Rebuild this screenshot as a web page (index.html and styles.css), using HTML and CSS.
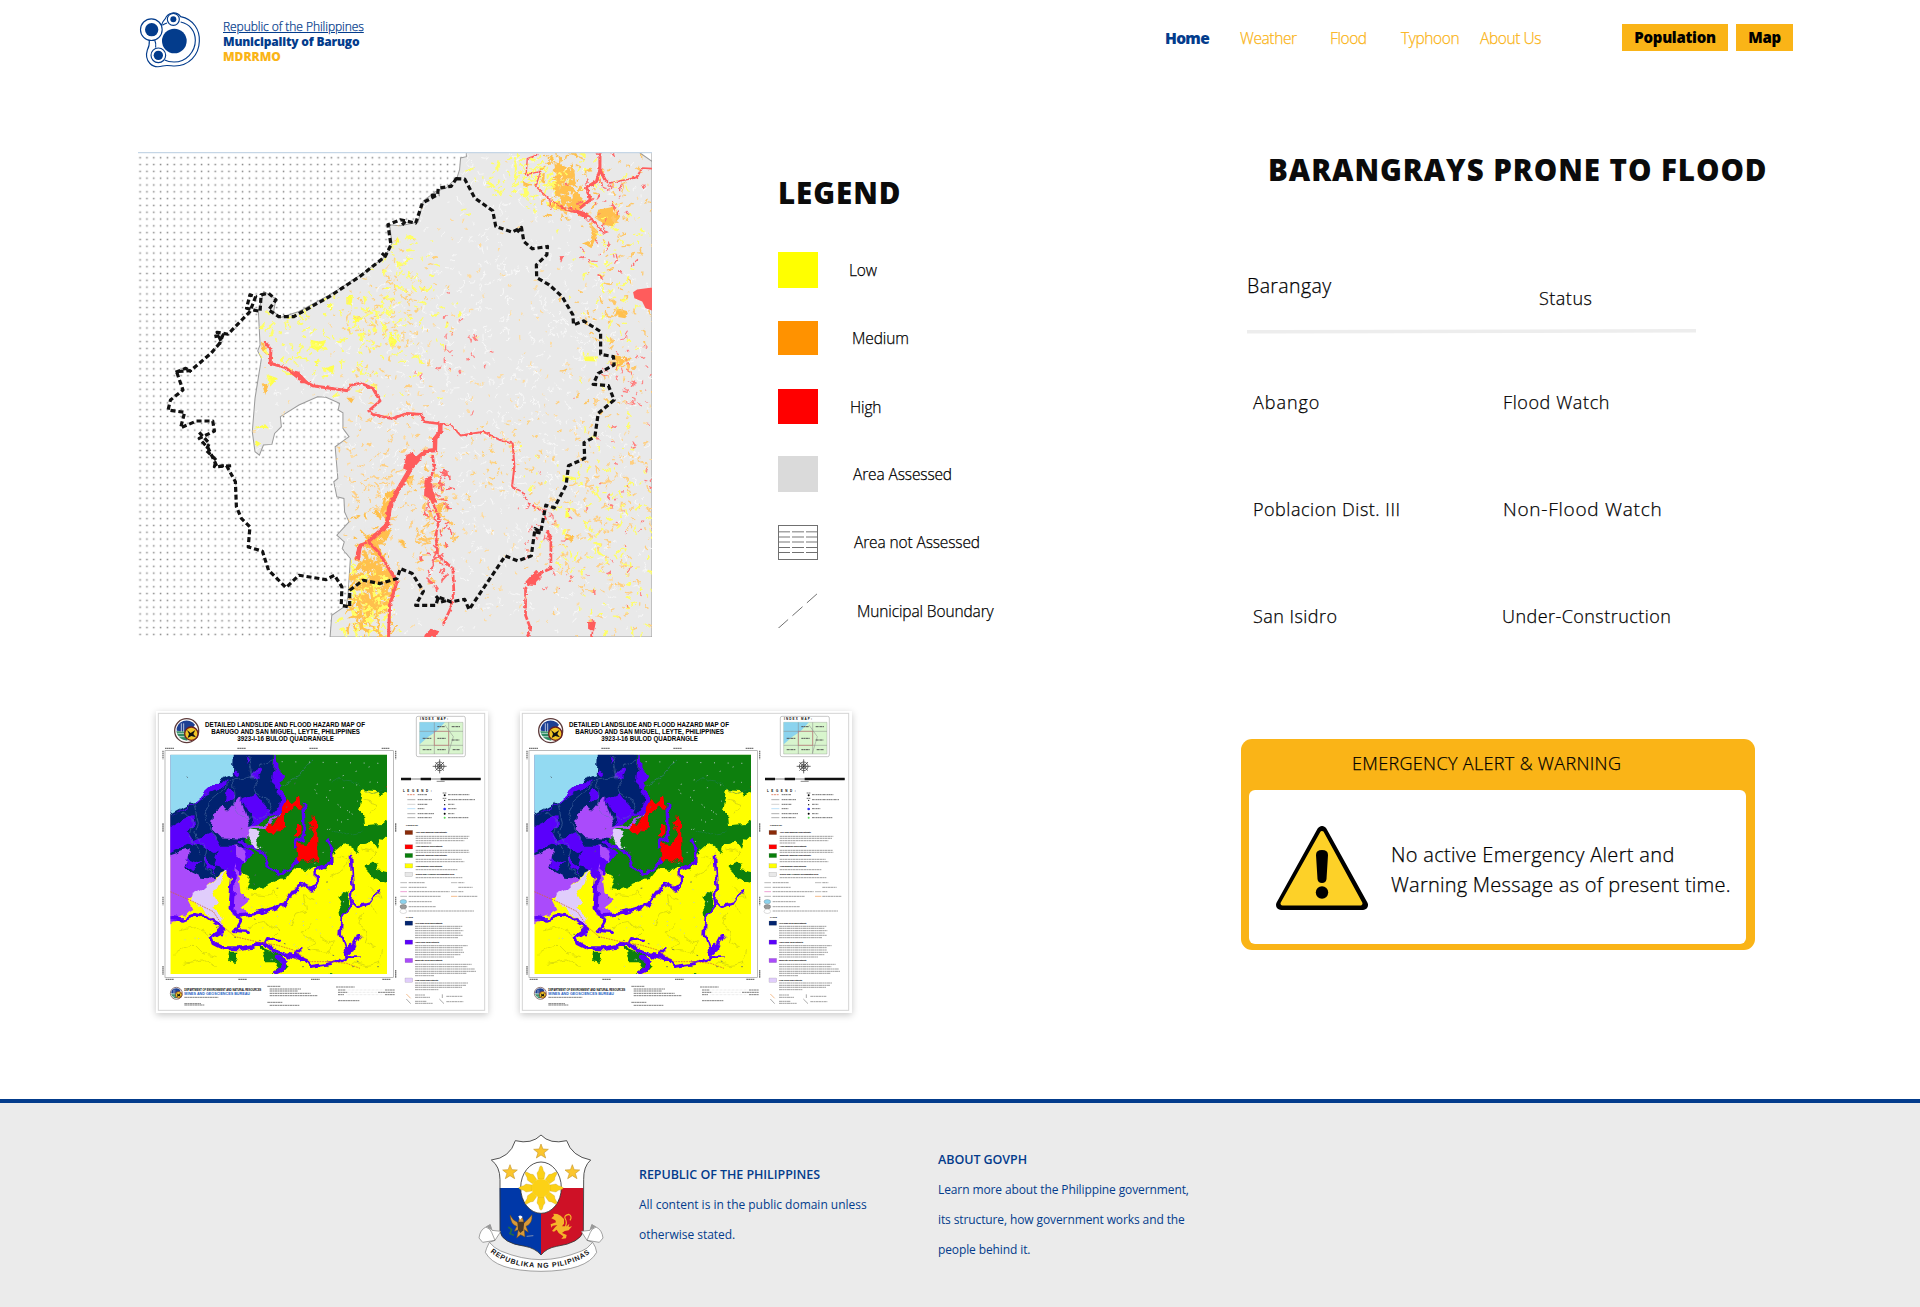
FILE: index.html
```html
<!DOCTYPE html>
<html lang="en">
<head>
<meta charset="utf-8">
<title>Municipality of Barugo MDRRMO</title>
<link rel="stylesheet" href="styles.css">
</head>
<body>
<header class="header">
  <a class="brand" href="#">
    <svg class="brand-logo" viewBox="54 24 192 186" fill="none" stroke="#033c8c" stroke-width="3.4">
      <path d="M124 76A49 49 0 0 1 136 56 26 26 0 0 1 182 50C222 58 240 92 238 124 237 166 206 198 164 198 148 197 137 195 128 198 96 208 72 182 82 150Q89 138 88 120"/>
      <path d="M127 76Q133 72 141 69M182 66C210 72 226 94 226 121 226 156 198 186 162 186 150 186 141 184 134 180M104 120Q109 130 107 143"/>
      <circle cx="94" cy="89" r="32.500" fill="#fff"/><circle cx="160" cy="58" r="18" fill="#fff"/><circle cx="115" cy="166" r="22" fill="#fff"/>
      <g fill="#033c8c" stroke="none"><circle cx="163" cy="123" r="37"/><circle cx="95" cy="89" r="20"/><circle cx="160" cy="58" r="9"/><circle cx="115" cy="166" r="14"/></g>
    </svg>
    <span class="brand-text">
      <span class="brand-country">Republic of the Philippines</span>
      <span class="brand-town">Municipality of Barugo</span>
      <span class="brand-office">MDRRMO</span>
    </span>
  </a>
  <nav class="nav">
    <a class="nav-link nav-link-active" href="#">Home</a>
    <a class="nav-link" href="#">Weather</a>
    <a class="nav-link" href="#">Flood</a>
    <a class="nav-link" href="#">Typhoon</a>
    <a class="nav-link" href="#">About Us</a>
  </nav>
  <div class="actions">
    <a class="button button-wide" href="#">Population</a>
    <a class="button" href="#">Map</a>
  </div>
</header>

<main class="main">
  <div class="left">
    <div class="overview">
      <svg class="flood-map" viewBox="24 22 1520 1453" preserveAspectRatio="none">
        <defs>
          <pattern id="dots" x="20" y="29" width="20.200" height="20.400" patternUnits="userSpaceOnUse"><rect width="20.200" height="20.400" fill="#fff"/><rect x="8" y="8" width="4.500" height="4.500" fill="#858585"/></pattern>
          <filter id="ragged" x="0" y="0" width="1" height="1"><feTurbulence type="fractalNoise" baseFrequency=".12" numOctaves="2" seed="4"/><feDisplacementMap in="SourceGraphic" scale="9" xChannelSelector="R" yChannelSelector="G"/></filter>
          <path id="land" d="M995 22V36L978 40 975 75 968 97 935 130 905 140 868 168 852 232 800 243 768 240 775 295 755 335 690 385 600 445 500 500 445 518 425 500 432 462 396 440 380 500 385 600 378 618 389 640 370 760 362 860 370 920 383 930 395 900 420 898 428 865 448 845 445 815 500 780 555 755 580 757 620 775 616 795 630 803 630 850 648 875 607 905 615 1000 603 1010 612 1055 633 1060 635 1100 648 1130 612 1170 634 1190 628 1210 652 1240 645 1350 640 1380 597 1410 592 1475H1544V22Z"/>
          <clipPath id="land-clip"><use href="#land"/></clipPath>
        </defs>
        <rect x="24" y="22" width="1520" height="1453" fill="url(#dots)"/>
        <use href="#land" fill="#e9e9e9" stroke="#9b9b9b" stroke-width="3"/>
        <g clip-path="url(#land-clip)">
          <g filter="url(#ragged)">
          <g fill="#ffc04d">
            <path d="M1255 50L1295 70 1310 60 1315 100 1300 120 1330 150 1350 180 1320 205 1260 195 1230 180 1275 165 1255 140 1240 110 1260 100ZM1385 195L1435 185 1450 215 1430 245 1400 240 1380 215ZM1365 240L1385 260 1365 310 1340 295 1365 285ZM700 1170L775 1150 760 1185 735 1200 770 1270 790 1300 780 1360 760 1400 725 1390 700 1440 660 1410 680 1340 660 1290 680 1240Z"/>
            <path d="M755 1045L785 1030 760 1130 740 1100ZM812 1000L840 990 830 1030ZM640 758H665L655 775ZM388 590L400 600 405 630 390 615ZM390 715L410 720 400 750ZM1440 490L1475 500 1465 520 1435 515ZM1430 630L1485 640 1440 670ZM905 1080L930 1075 915 1110ZM1290 1165L1315 1175 1305 1190 1285 1180Z"/>
          </g>
          <g fill="#ffff4d">
            <path d="M535 585L560 590 580 585 572 605 555 618 535 608ZM640 455L660 450 655 480 640 478ZM585 480L603 475 595 500ZM660 510L690 520 665 535ZM770 560L790 590 775 615 765 590ZM545 650L560 640 555 665ZM575 670L605 660 600 685ZM410 690L437 700 415 725ZM365 850L400 838 412 850 390 848ZM370 885L388 895 375 905ZM790 275L800 290 785 300ZM1340 635H1385L1380 650 1345 648ZM1280 990L1330 1000 1280 1010ZM1290 1090L1302 1115 1287 1118Z"/>
          </g>
          <g id="flecks" stroke-linejoin="round" stroke-linecap="round"></g>
          <g fill="none" stroke="#ff5c5c" stroke-linejoin="round">
            <path stroke-width="9" d="M397 588L417 615 415 655 460 668 500 700 540 722 645 737"/>
            <path stroke-width="8" d="M645 737L650 722 682 714 718 730 740 768 706 797 718 808 775 821 820 805 862 808 870 830 915 836"/>
            <path stroke-width="6" d="M915 836L950 841 978 871 1045 860 1095 885 1132 895 1137 965 1130 1025"/>
            <path stroke-width="5" stroke-dasharray="12 5" d="M1130 1025L1160 1040 1180 1075 1222 1100 1232 1125"/>
            <path stroke-width="13" d="M918 838V860L903 880 902 915 875 918 850 940"/>
            <path stroke-width="14" d="M838 935L825 980 790 1040 768 1085 760 1140 705 1190"/>
            <path stroke-width="9" d="M705 1190L735 1220 790 1310 768 1380 765 1475"/>
            <path stroke-width="8" stroke-dasharray="23 3" d="M895 930L900 970 880 1020 895 1070 915 1120 905 1170 910 1230 955 1270 958 1340 948 1390 925 1440"/>
            <path stroke-width="4" d="M1208 29L1175 42 1172 90 1215 80 1200 125 1242 165 1245 195"/>
            <path stroke-width="9" d="M1390 22V75L1405 105M1390 75L1380 110 1350 128 1362 165 1330 190"/>
            <path stroke-width="5" d="M1400 100L1420 115 1500 98 1515 70 1544 72M1250 170L1290 195 1360 215 1400 265"/>
            <path stroke-width="8" stroke-dasharray="30 5" d="M1235 1155L1245 1190 1245 1270 1200 1290 1170 1330 1170 1410 1185 1450 1175 1475M1370 1425L1365 1475"/>
          </g>
          <g fill="#ff5c5c">
            <path d="M818 930L835 922 860 945 830 980 808 970ZM872 1000L890 995 895 1030 910 1075 895 1065 870 1052ZM680 1195L705 1188 685 1210 680 1245 665 1245 672 1205ZM480 675L500 680 530 715 505 715ZM1290 185L1355 205 1350 225ZM1200 1275L1215 1290 1200 1320 1165 1315ZM872 1468L890 1450 915 1458 905 1475H870ZM1355 1430H1378L1372 1460 1355 1450Z"/>
          </g>
          </g>
          <path d="M1488 442L1500 434 1544 428V497L1525 490 1515 470 1492 460Z" fill="#ff5c5c"/>
        </g>
        <path d="M1505 22L1544 50V22Z" fill="#fff" stroke="#9b9b9b" stroke-width="3"/>
        <g fill="none" stroke="#111" stroke-width="9.500" stroke-dasharray="15 8.500" stroke-linejoin="round">
          <path d="M965 102L990 103 1020 160 1073 198 1082 245 1130 262 1158 248 1165 290 1190 312 1235 305 1233 330 1202 360 1203 398 1240 420 1278 455 1310 510 1312 540 1342 528 1392 560 1392 628 1430 635 1432 660 1385 685 1370 718 1415 722 1432 765 1385 805 1375 875 1343 893 1345 940 1297 962 1290 1020 1255 1088 1230 1080 1215 1160 1198 1150 1187 1232 1147 1247 1110 1232 1003 1393 990 1362 950 1370 912 1355 905 1380 845 1380 868 1338 835 1285 800 1270 790 1300 740 1315 690 1305 650 1335 650 1385 625 1380 627 1325 605 1290 580 1303 500 1290 462 1327 410 1275 392 1218 350 1205 355 1145 330 1120 315 1085 312 1010 285 960 258 965 232 910 205 880 250 858 245 828 197 828 150 848 162 802 113 795 120 765 157 735 138 680 180 677 240 625 270 590 258 562 290 568 355 500 372 455 355 450 345 490 385 500 388 450 410 445 432 465 410 495 440 515 485 515 590 455 680 395 755 335 772 300 763 240 800 225 845 235 865 175 910 150 912 130 950 125Z"/>
          <path d="M205 862L235 895 225 915 255 945 250 965 300 962M135 682L165 670 182 680M745 325L762 340M890 152L915 150M1145 262L1160 248M1200 1160L1220 1165M250 575L275 570 265 598M805 240L815 230M905 1352L920 1370 940 1365"/>
        </g>
        <path d="M24 23.500H1544" stroke="#c5d6e6" stroke-width="5"/>
      </svg>

      <section class="legend">
        <h2 class="heading">LEGEND</h2>
        <ul class="legend-list">
          <li><span class="swatch low"></span><span class="t-low">Low</span></li>
          <li><span class="swatch medium"></span><span class="t-medium">Medium</span></li>
          <li><span class="swatch high"></span><span class="t-high">High</span></li>
          <li><span class="swatch assessed"></span><span class="t-assessed">Area Assessed</span></li>
          <li>
            <svg class="swatch-svg" viewBox="0 0 40 35" fill="none" stroke="#707070"><rect x=".5" y=".5" width="39" height="34"/><path d="M1 22.500H12M14 22.500H26M28 22.500H39M1 27.500H12M14 27.500H26M28 27.500H39"/><path stroke="#a5a5a5" stroke-width="1.500" d="M1 6.700H12M14 6.700H26M28 6.700H39M1 11.900H12M14 11.900H26M28 11.900H39M1 17.100H12M14 17.100H26M28 17.100H39"/></svg>
            <span class="t-not">Area not Assessed</span>
          </li>
          <li>
            <svg class="swatch-svg" viewBox="0 0 40 35" fill="none" stroke="#707070"><path stroke-dasharray="13.500 5.800" d="M0 35.500L40 0"/></svg>
            <span class="t-boundary">Municipal Boundary</span>
          </li>
        </ul>
      </section>
    </div>

    <div class="gallery">
      <figure class="sheet">
        <svg class="sheet-map" viewBox="18 33 996 906">
          <defs>
            <filter id="organic" x="0" y="0" width="1" height="1"><feTurbulence type="fractalNoise" baseFrequency=".035" numOctaves="2" seed="9"/><feDisplacementMap in="SourceGraphic" scale="26" xChannelSelector="R" yChannelSelector="G"/></filter>
            <g id="sheet">
              <rect x="25" y="40" width="979" height="891" fill="#fff" stroke="#d4d4d4" stroke-width="3"/>
              <g id="seal">
                <circle cx="110" cy="92" r="36" fill="#fff" stroke="#5c3a3a" stroke-width="4"/>
                <path d="M80 92A30 28 0 0 1 135 74L120 96Z" fill="#1d3f93"/><path d="M79 94H112V122Q84 120 79 94Z" fill="#2f8a63"/><path d="M82 100H110M85 110H110M94 70V95M101 70V95" stroke="#fff" stroke-width="2"/>
                <circle cx="124" cy="101" r="20" fill="#f1c526" stroke="#6b2020" stroke-width="4"/><path d="M111 90L122 99 136 90 130 102 138 112 124 108 113 114 117 102Z" fill="#111"/>
              </g>
              <g class="sheet-title" text-anchor="middle">
                <text x="405" y="80" textLength="480" lengthAdjust="spacingAndGlyphs">DETAILED LANDSLIDE AND FLOOD HAZARD MAP OF</text>
                <text x="407" y="101" textLength="446" lengthAdjust="spacingAndGlyphs">BARUGO AND SAN MIGUEL, LEYTE, PHILIPPINES</text>
                <text x="407" y="122" textLength="290" lengthAdjust="spacingAndGlyphs">3923-I-16 BULOD QUADRANGLE</text>
              </g>
              <rect x="45" y="152" width="685" height="680" fill="none" stroke="#999" stroke-width="2"/>
              <path d="M45 145H72M262 145H288M478 145H504M695 145H718M47 838H72M265 838H291M483 838H509M697 838H722M39 152V178M39 370V396M39 590V616M39 798V824M737 152V178M737 370V396M737 590V616M737 810V834" stroke="#777" stroke-width="4" stroke-dasharray="5 1"/>
              <clipPath id="frame"><rect x="61" y="164" width="650" height="658"/></clipPath>
              <g clip-path="url(#frame)">
                <rect x="61" y="164" width="650" height="658" fill="#ff0"/>
                <path fill="#5a02fb" d="M61 164H360V350L200 490 61 470Z"/>
                <g filter="url(#organic)">
                <path fill="#087f0b" d="M370 140H735V270L690 290 680 270 650 268 640 300 628 330 645 345 645 375 700 370 735 350V420L690 415 680 450 665 425 635 430 625 460 585 430 550 460 550 490 530 505 490 500 470 510 430 505 410 530 370 548 320 570 290 565 300 535 275 520 260 460 300 400 340 360Z"/>
                <path fill="#ff0" d="M640 268L680 272 690 290 735 275V345L700 372 645 375 642 340 628 330Z"/>
                <path fill="#087f0b" d="M640 500L670 488 690 495 680 510 735 520V550L670 535ZM580 570L598 575 592 630 572 655 566 610ZM240 755H262L258 775 250 790 238 780ZM335 740L395 765 420 800 400 822H365L385 805 375 790 345 790ZM540 815L550 822H530Z"/>
                <path fill="#02246f" d="M240 130H370V215L390 270 400 310 370 345 310 370 280 440 230 500 170 560 110 590 30 560V350L61 330 130 295 200 245 240 215Z"/>
                <path fill="#93daf2" d="M30 130H250L245 225 205 240 160 290 61 342 30 360Z"/>
                <path fill="#5a02fb" d="M375 130L380 210 410 230 388 245 405 285 405 325 380 345 310 375 300 340 275 300 320 280 365 345 385 315 390 270 365 245 370 210ZM61 350L130 310 205 243 238 245 215 262 165 290 110 325ZM30 385L61 380 130 345 135 375 110 390 130 420 185 395 215 445 195 460 150 435 120 430 30 470ZM210 440L290 440 310 460 300 480 280 490 270 530 245 520 190 500ZM230 270Q250 260 255 285T225 300ZM288 165L300 185 290 195ZM250 205L268 225 262 232 248 222ZM318 205Q335 200 328 222T305 235ZM160 470Q190 490 195 520L170 505ZM115 475L150 490 130 510 110 500Z"/>
                <path fill="#aa4bfb" d="M190 335L215 320 235 335 272 290 290 350 300 380 345 375 400 330 350 385 300 390 295 420 250 418 215 415 185 385ZM30 475L120 445 115 480 105 505 155 530 200 535 160 570 110 590 130 630 61 670 30 680ZM250 435L285 450 290 470 285 490 265 470ZM260 490L272 580 300 600 270 625 300 635 250 650 240 600Z"/>
                <path fill="#e0cdfb" d="M230 500L210 560 190 570 205 610 190 625 218 650 215 685 175 640 120 600 125 580 180 555 215 520ZM300 390L330 395 315 420 335 445 310 440 295 410Z"/>
                <path fill="#f00" d="M410 290L425 310 450 288 455 325 430 320 420 345 405 345 405 385 385 388 370 405 350 385 355 370 370 375 390 340ZM438 378H452L450 415H438ZM485 345L498 360 500 470 505 490 490 480 475 492 460 480 428 488 445 470 440 430 465 435 480 425 490 400 480 370ZM715 248L705 258 715 262Z"/>
                <g fill="none" stroke="#5a02fb" stroke-linejoin="round" stroke-linecap="round">
                  <path stroke-width="15" d="M230 500L250 530 243 630 265 645"/>
                  <path stroke-width="10" d="M40 654L100 660 140 645 170 650 205 675 215 705M265 645L300 640 340 632 400 620 420 590 450 550 485 570 500 545 498 510 545 490 545 455 532 420M265 645L275 660 255 695 298 697"/>
                  <path stroke-width="12" d="M217 690L185 710 190 730 220 745 270 745 320 735 350 735 370 750 410 765 440 770 465 780"/>
                  <path stroke-width="8" d="M345 735L355 715 385 720M465 780L480 800 550 790 590 770 585 740 572 700 575 655 600 620 608 570 603 465M600 595L625 620 660 610 687 570M585 745L610 745 630 705M590 770L625 770M435 765L455 745M270 430L310 440 340 460 360 500 390 525 420 500 440 480M462 315L465 360 460 420 440 425 435 445"/>
                  <path stroke-width="17" d="M385 775L405 785 400 810 380 820M590 755L605 740"/>
                  <path stroke-width="13" d="M461 325L464 400"/>
                </g>
                <path fill="none" stroke="#5579ad" stroke-width="1.500" d="M245 225L255 280 250 330 290 355 350 350 365 310 320 280 310 230 330 195 370 180M130 305L145 370 135 400 170 450 160 500 200 530 230 500M295 165L310 230 250 240 180 300 165 350 200 420M90 340L130 360 120 410 150 460M395 260L450 220 490 175"/>
                <path fill="none" stroke="#a3a81c" stroke-width="1.200" d="M300 585L350 590 370 570 385 590M420 680L440 640 470 630 460 590 500 600M480 670L460 700 490 720 470 750 530 760 550 730 510 710M640 640L620 670 650 690 640 730 680 740M660 560L690 590 660 600 680 640M90 690L130 680 180 700M80 760L130 730 160 760 200 770M100 790L160 780 200 800M290 680L340 670 390 690 370 710M560 470L600 480 580 510 540 530M640 450L680 460 660 480M640 300L680 310 660 340M610 790L650 800 690 790 700 750"/>
                <path fill="none" stroke="#2f7a60" stroke-width="1.500" d="M545 250L570 235 605 240 640 265 670 280 711 265M545 385L590 405 640 395"/>
                </g>
                <path fill="none" stroke="#d46a35" stroke-width="2.500" stroke-dasharray="5 3" d="M61 575L130 605 190 635 220 680 255 710 320 725 380 735 430 750 480 785 540 785 590 790 630 805"/>
                <path fill="none" stroke="#b8c8c8" stroke-width="3" stroke-dasharray="3 38" d="M395 185L690 190 480 260 620 350 500 280 690 240 520 400 600 350 450 550 680 600 300 620 500 690 330 800 620 640 100 720 300 700"/>
                <path fill="none" stroke="#53616c" stroke-width="2.500" stroke-dasharray="5 70" d="M110 230L230 335 275 385 225 495 340 570 540 545 155 700 400 730 690 800 400 800 280 600 400 350 440 235"/>
              </g>
              <rect x="799" y="49" width="147" height="121" rx="5" fill="#fff" stroke="#ababab" stroke-width="2"/>
              <text class="sheet-label" x="810" y="59" textLength="84">INDEX MAP:</text>
              <path d="M809 67H939V162H809Z" fill="#d8f5cd" stroke="#888"/><path d="M809 67H885L858 95 835 110 809 133Z" fill="#8bd3ee"/>
              <path d="M853 67V162M896 67V162M809 94H939M809 136H939M885 75L910 110 895 160" fill="none" stroke="#888" stroke-width="1.500"/><path d="M853 94H896V136H853Z" fill="none" stroke="#c66" stroke-width="1.500"/>
              <path d="M818 149H845M862 149H888M908 149H930M862 80H885M905 80H930M862 115H888M818 115H845M905 120H928" stroke="#555" stroke-width="3" stroke-dasharray="7 1 4 1"/>
              <g fill="none" stroke="#222" stroke-width="2"><circle cx="869" cy="199" r="13"/><circle cx="869" cy="199" r="7"/><path d="M869 178V220M848 199H890M856 186L882 212M882 186L856 212"/></g>
              <path d="M753 237H993" stroke="#aaa" stroke-width="5"/><path d="M753 237H783M812 237H843M872 237H992" stroke="#111" stroke-width="7"/><path d="M860 244H884" stroke="#888" stroke-width="3"/>
              <text class="sheet-label" x="759" y="275" textLength="86">LEGEND:</text>
              <g fill="none" stroke-width="2"><path stroke="#d55b36" stroke-dasharray="6 2" d="M772 284H796"/><path stroke="#888" d="M772 299H796M772 341H796M772 353H796"/><path stroke="#bbb" d="M772 313H796"/><path stroke="#9ad0f4" d="M772 326H796"/></g>
              <path d="M803 284H832M803 299H846M803 313H833M803 326H823M803 341H852M803 353H845M894 284H958M894 299H975M894 313H913M894 326H919M894 341H913M894 353H956M878 279H890M878 295H890" stroke="#777" stroke-width="3" stroke-dasharray="6 1 3 1"/>
              <circle cx="884" cy="286" r="3"/><circle cx="884" cy="301" r="2"/><circle cx="884" cy="314" r="2"/><circle cx="884" cy="327" r="4" fill="#33f"/><circle cx="884" cy="341" r="3"/><circle cx="884" cy="353" r="3" fill="#5d5"/>
              <g class="sheet-small">
                <text x="768" y="379" textLength="36">Landslide</text>
                <text x="797" y="399" textLength="94">Very high landslide susceptibility</text><text x="797" y="442" textLength="81">High landslide susceptibility</text><text x="797" y="468" textLength="94">Moderate landslide susceptibility</text><text x="797" y="500" textLength="80">Low landslide susceptibility</text><text x="797" y="524" textLength="116">Debris flow / Possible accumulation area</text>
                <text x="768" y="655" textLength="21">Flood</text><text x="795" y="671" textLength="83">Very high flood susceptibility</text><text x="795" y="729" textLength="73">High flood susceptibility</text><text x="795" y="784" textLength="83">Moderate flood susceptibility</text><text x="795" y="842" textLength="70">Low flood susceptibility</text>
              </g>
              <g stroke="#777" stroke-width=".6"><rect x="765" y="391" width="23" height="13" fill="#8a2a08"/><rect x="765" y="434" width="23" height="13" fill="#f00"/><rect x="765" y="460" width="23" height="13" fill="#087f0b"/><rect x="765" y="491" width="23" height="13" fill="#ff0"/><rect x="765" y="517" width="23" height="13" fill="#e8e8e8"/><rect x="765" y="663" width="23" height="13" fill="#02246f"/><rect x="765" y="720" width="23" height="13" fill="#5a02fb"/><rect x="765" y="775" width="23" height="13" fill="#aa4bfb"/><rect x="765" y="834" width="23" height="13" fill="#e0cdfb"/></g>
              <path stroke="#9a9a9a" stroke-width="2.800" stroke-dasharray="9 1 5 1 7 1" d="M797 409H958M797 415H954M797 422H943M797 429H845M797 451H956M797 457H958M797 478H935M797 485H943M797 509H922M797 533H937M776 548H825M776 562H830M776 575H899M776 589H873M925 548H943M925 562H968M925 575H941M925 589H982M776 605H845M776 620H857M776 633H972M795 679H937M795 685H932M795 692H940M795 699H933M795 706H938M795 713H925M795 737H953M795 743H938M795 750H939M795 757H942M795 764H932M795 771H912M795 793H965M795 800H952M795 807H975M795 814H978M795 820H950M795 827H852M795 849H955M795 856H948M795 862H936M795 869H865M795 885H825M795 892H840M795 904H830M795 910H848M889 889H938M889 905H940"/>
              <path d="M751 548H771M751 589H771M903 548H922M751 562H771M903 575H922" stroke="#777" stroke-width="1.500"/><path d="M751 575H771" stroke="#d4a" stroke-width="1.500"/><path d="M903 589H922M769 882L782 895" stroke="#ee9b55" stroke-width="2"/><path d="M769 897L782 911M868 897L882 911M877 883V894" stroke="#555" stroke-width="1.500"/>
              <ellipse cx="760" cy="605" rx="10" ry="6.500" fill="#8bd3ee" stroke="#777"/><ellipse cx="760" cy="620" rx="10" ry="6.500" fill="#999" stroke="#555"/><ellipse cx="760" cy="634" rx="10" ry="6.500" fill="#fff" stroke="#999"/>
              <use href="#seal" transform="translate(24 834) scale(.5)"/>
              <text class="sheet-dept" x="103" y="873" textLength="231" lengthAdjust="spacingAndGlyphs">DEPARTMENT OF ENVIRONMENT AND NATURAL RESOURCES</text>
              <text class="sheet-bureau" x="103" y="885" textLength="197" lengthAdjust="spacingAndGlyphs">MINES AND GEOSCIENCES BUREAU</text>
              <path stroke="#777" stroke-width="2.800" stroke-dasharray="8 1 5 1" d="M103 892H205M103 911H153M103 915H164M352 859H392M359 867H453M359 873H444M359 880H482M359 887H502M352 907H398M359 916H448M558 861H614M564 870H586M564 877H592M564 884H582M705 870H734M684 877H734M705 884H734M564 902H628"/>
              <path stroke="#aaa" stroke-dasharray="2 2" d="M590 870H703M595 877H682M590 884H703"/>
            </g>
          </defs>
          <use href="#sheet"/>
        </svg>
      </figure>
      <figure class="sheet">
        <svg class="sheet-map" viewBox="18 33 996 906"><use href="#sheet"/></svg>
      </figure>
    </div>
  </div>

  <div class="right">
    <h2 class="heading heading-status">BARANGRAYS PRONE TO FLOOD</h2>
    <div class="status-head">
      <span class="col-barangay">Barangay</span>
      <span class="col-status">Status</span>
    </div>
    <svg class="rule" viewBox="0 0 449 5"><path d="M0 1L449 0V3.500L0 4.500Z" fill="#ededed"/></svg>
    <dl class="status-list">
      <dt class="s-abango">Abango</dt><dd class="s-watch">Flood Watch</dd>
      <dt class="s-poblacion">Poblacion Dist. III</dt><dd class="s-non">Non-Flood Watch</dd>
      <dt class="s-isidro">San Isidro</dt><dd class="s-under">Under-Construction</dd>
    </dl>
    <section class="alert">
      <h3 class="alert-title">EMERGENCY ALERT &amp; WARNING</h3>
      <div class="alert-body">
        <svg class="alert-icon" viewBox="0 0 92 84"><path d="M46 5L87 79H5Z" fill="#000" stroke="#000" stroke-width="10" stroke-linejoin="round"/><path d="M46 7L84.500 77.500H6.500Z" fill="#fdd128" stroke="#fdd128" stroke-width="4" stroke-linejoin="round"/><path d="M40 29Q40 24 46 24T52 29L50.500 53Q50 57 46 57T41.500 53Z"/><circle cx="46" cy="66.500" r="6.200"/></svg>
        <p class="alert-text"><span class="line-one">No active Emergency Alert and</span><br><span class="line-two">Warning Message as of present time.</span></p>
      </div>
    </section>
  </div>
</main>

<footer class="footer">
  <svg class="arms" viewBox="24 130 378 420">
    <path d="M213 136Q240 165 290 153 305 200 362 211 340 230 341 270L340 425Q330 460 260 470 230 475 213 496 195 475 165 470 95 460 90 425L90 270Q90 230 64 211 120 205 136 153 185 165 213 136Z" fill="#fff"/>
    <path d="M89 295H213V496Q195 475 165 470 95 460 90 425Z" fill="#0038a8"/><path d="M213 295H340V425Q330 460 260 470 230 475 213 496Z" fill="#ce1126"/>
    <path d="M213 136Q240 165 290 153 305 200 362 211 340 230 341 270L340 425Q330 460 260 470 230 475 213 496 195 475 165 470 95 460 90 425L90 270Q90 230 64 211 120 205 136 153 185 165 213 136Z" fill="none" stroke="#333" stroke-width="2.500"/>
    <ellipse cx="213" cy="294" rx="61" ry="77" fill="#fff" stroke="#333" stroke-width="2.500"/>
    <g fill="#fcd116" stroke="#c9a02a" stroke-width="1">
      <path id="ray" d="M204 268L201 250 206 243 209 232 213 228 217 232 220 243 225 250 222 268Z"/>
      <use href="#ray" transform="rotate(45 213 295)"/><use href="#ray" transform="rotate(90 213 295)"/><use href="#ray" transform="rotate(135 213 295)"/><use href="#ray" transform="rotate(180 213 295)"/><use href="#ray" transform="rotate(225 213 295)"/><use href="#ray" transform="rotate(270 213 295)"/><use href="#ray" transform="rotate(315 213 295)"/>
      <circle cx="213" cy="295" r="28" stroke="none"/>
      <path id="star" d="M213 163L218.500 178 235 179 222 189.500 227 205 213 196 199 205 204 189.500 191 179 207.500 178Z" fill="#fbc62d" stroke="#c99a30" stroke-width="2"/>
      <use href="#star" x="-93" y="62"/><use href="#star" x="94" y="62"/>
    </g>
    <path d="M120 376Q122 405 140 410L133 425 145 420 140 445 152 435 165 442 163 420 175 428 168 410Q188 402 186 375L175 388 162 400 158 385 148 386 145 400 130 390Z" fill="#d89a3a" stroke="#6b4a18" stroke-width="1.500"/>
    <path d="M142 396H163L160 422 151 430 144 420Z" fill="#4b3a2a"/><path d="M145 380Q152 374 158 382L150 390Z" fill="#fff"/><path d="M115 412L125 420 120 432 132 437" stroke="#236b45" stroke-width="5" fill="none"/><path d="M170 440L190 438" stroke="#bbb" stroke-width="2"/>
    <path d="M244 386L252 378 250 372 262 373 272 378 282 388 282 402 276 410 290 410 298 402 296 412 306 410 296 422 284 424 276 430 290 436 288 446 274 448 280 440 266 430 260 420 252 426 246 424 256 412 262 406 248 408 244 414 242 404 258 398 256 392Z" fill="#f5b52a"/>
    <path d="M286 412Q292 398 286 388T296 374Q308 380 300 392" stroke="#f5b52a" stroke-width="3.500" fill="none"/>
    <g fill="#fff" stroke="#777" stroke-width="2"><path d="M60 405L48 412Q30 420 27 445L38 458 75 452 88 432 92 425 66 422Z"/><path d="M366 405L378 412Q396 420 399 445L388 458 351 452 338 432 334 425 360 422Z"/></g>
    <path d="M48 412Q62 418 65 428L75 452 58 458M378 412Q364 418 361 428L351 452 368 458" fill="none" stroke="#777" stroke-width="2"/><path d="M50 410L62 404 66 422 54 415ZM376 410L364 404 360 422 372 415Z" fill="#999"/>
    <path d="M58 458Q48 478 46 488 75 544 213 545 350 544 380 488 378 472 368 458 350 480 335 484 270 510 213 510 155 510 92 484 72 475 58 458Z" fill="#fff" stroke="#777" stroke-width="2"/>
    <path id="ribbon" d="M58 484Q115 534 213 534T368 484" fill="none"/>
    <text class="arms-text"><textPath href="#ribbon" startOffset="4" textLength="318">REPUBLIKA NG PILIPINAS</textPath></text>
  </svg>
  <section class="footer-col footer-republic">
    <h4>REPUBLIC OF THE PHILIPPINES</h4>
    <p>All content is in the public domain unless<br>otherwise stated.</p>
  </section>
  <section class="footer-col footer-about">
    <h4>ABOUT GOVPH</h4>
    <p>Learn more about the Philippine government,<br>its structure, how government works and the<br>people behind it.</p>
  </section>
</footer>
<script src="flecks.js"></script>
</body>
</html>
```
FILE: styles.css
```css
* { box-sizing: border-box; }
body { margin: 0; background: #fff; color: #000; font-family: "Open Sans", "Noto Sans", sans-serif; font-weight: 300; height: 1307px; display: flex; flex-direction: column; overflow: hidden; }
a { color: inherit; text-decoration: none; }
h2, h3, h4, p, ul, dl, dd, figure { margin: 0; padding: 0; }
svg { display: block; }
span { white-space: nowrap; }

/* Light text gets a hairline outline so it stays readable at small sizes. */
.brand-country, .nav-link, .legend-list, .status-head, .status-list, .alert { -webkit-text-stroke: .25px currentColor; }

.header { height: 75px; display: flex; align-items: center; padding-left: 138px; flex: none; }
.brand { display: flex; align-items: center; width: 1027px; padding-top: 2px; }
.brand-logo { width: 64px; height: 62px; }
.brand-text { display: flex; flex-direction: column; align-items: flex-start; margin: 5px 0 0 21px; font-size: 12px; line-height: 15px; color: #033c8c; }
.brand-country { text-decoration: underline; letter-spacing: -.06px; }
.brand-town { font-weight: 800; letter-spacing: -.2px; }
.brand-office { font-weight: 800; color: #fab417; }
.nav { display: grid; grid-template-columns: 75px 90px 71px 79px 142px; font-size: 15.5px; color: #fab417; }
.nav-link { letter-spacing: -.4px; white-space: nowrap; }
.nav-link-active { color: #033c8c; font-weight: 800; letter-spacing: -.7px; -webkit-text-stroke: 0; }
.actions { display: flex; gap: 8px; color: #000; font-size: 15px; font-weight: 800; }
.button { width: 57px; height: 27px; line-height: 27px; background: #fab417; text-align: center; letter-spacing: -.3px; }
.button-wide { width: 106px; }

.main { flex: 1; display: grid; grid-template-columns: 1241px 514px; padding-top: 77px; }
.left { padding-left: 138px; }
.overview { display: flex; gap: 126px; height: 485px; }
.flood-map { width: 514px; height: 485px; }
.heading { color: #0b0b0b; font-size: 29.5px; line-height: 36px; font-weight: 800; letter-spacing: .95px; white-space: nowrap; }
.legend { padding-top: 23px; }
.legend-list { list-style: none; padding-top: 25px; }
.legend-list li { height: 68.100px; display: flex; align-items: center; font-size: 15.500px; letter-spacing: -.12px; }
.swatch { width: 40px; height: 36px; }
.swatch-svg { width: 40px; height: 35px; }
.low { background: #ff0; }
.medium { background: #ff9200; height: 34px; }
.high { background: #f00; height: 35px; }
.assessed { background: #dadada; }
.t-low { margin-left: 31px; }
.t-high { margin-left: 32px; padding-top: 1px; }
.t-medium { margin-left: 34px; }
.t-assessed { margin-left: 35px; }
.t-not { margin-left: 36px; }
.t-boundary { margin-left: 39px; }
.gallery { display: flex; gap: 32px; padding: 74px 0 0 18px; }
.sheet { width: 332px; height: 302px; background: #fff; box-shadow: 0 2px 7px rgba(0, 0, 0, .22); }
.sheet-map { width: 332px; height: 302px; }
.sheet-title { font: bold 20px "Liberation Sans", sans-serif; }
.sheet-label { font: bold 9px "Liberation Sans", sans-serif; }
.sheet-small { font: bold 7px "Liberation Sans", sans-serif; }
.sheet-dept { font: bold 10px "Liberation Sans", sans-serif; }
.sheet-bureau { font: bold 12px "Liberation Sans", sans-serif; fill: #1c5fc4; }

.heading-status { padding: 0 0 0 27px; }
.status-head { display: flex; padding: 84px 0 0 6px; height: 141px; }
.col-barangay { font-size: 19.500px; line-height: 28px; width: 292px; letter-spacing: .4px; }
.col-status { font-size: 18px; line-height: 28px; padding-top: 12px; letter-spacing: .5px; }
.rule { width: 449px; height: 5px; margin-left: 6px; }
.status-list { display: grid; grid-template-columns: 250px 1fr; grid-auto-rows: 107px; align-items: center; font-size: 18px; padding: 14px 0 0 12px; margin-bottom: 70px; white-space: nowrap; letter-spacing: .45px; }
.s-abango { letter-spacing: .95px; }
.s-watch { letter-spacing: .6px; }
.s-poblacion { letter-spacing: .52px; }
.s-non { font-size: 19px; letter-spacing: .75px; }
.s-under { margin-left: -1px; }
.alert { height: 211px; background: #fab417; border-radius: 11px; padding: 0 9px 6px 8px; color: #000; }
.alert-title { height: 51px; line-height: 49px; font-size: 18px; font-weight: 300; padding-left: 103px; white-space: nowrap; letter-spacing: .34px; }
.alert-body { height: 154px; background: #fff; border-radius: 6px; display: flex; align-items: center; padding-left: 27px; }
.alert-icon { width: 92px; height: 84px; margin-top: 2px; }
.alert-text { font-size: 20px; line-height: 30px; margin-left: 23px; padding-top: 5px; }
.line-one { letter-spacing: .33px; }
.line-two { letter-spacing: .24px; }

.footer { flex: none; height: 208px; border-top: 4px solid #033c8c; background: #ebebeb; color: #033c8c; display: flex; padding-left: 478px; font-size: 12px; line-height: 30px; }
.arms { width: 126px; height: 140px; margin-top: 30px; }
.arms-text { font: bold 21px "Liberation Sans", sans-serif; fill: #111; }
.footer-col h4 { font-size: 12.500px; font-weight: 600; white-space: nowrap; letter-spacing: -.06px; }
.footer-col p { white-space: nowrap; font-weight: 400; }
.footer-republic { margin: 57px 0 0 35px; width: 299px; letter-spacing: -.02px; }
.footer-about { margin-top: 42px; letter-spacing: -.11px; }
```
FILE: flecks.js
```js
// Scatters the small hazard patches over the land part of the flood map.
const layer = document.getElementById("flecks");
let seed = 7;
const rnd = () => (seed = (seed * 16807) % 2147483647) / 2147483647;
const spread = () => rnd() + rnd() + rnd() - 1.5;

function fleck(x, y, size) {
  let d = `M${x.toFixed(1)} ${y.toFixed(1)}`;
  let a = rnd() * 6.28;
  const steps = 1 + Math.floor(rnd() * 4);
  for (let i = 0; i < steps; i++) {
    a += (rnd() - 0.5) * 2.8;
    const len = size * (0.4 + rnd());
    d += `l${(Math.cos(a) * len).toFixed(1)} ${(Math.sin(a) * len).toFixed(1)}`;
  }
  return d;
}

// colour, stroke width, count, centre x, centre y, half width, half height, step, filled
const clusters = [
  ["#fbfbfb", 2.4, 1100, 1080, 750, 720, 900, 8, false],
  ["#ffdb9c", 3, 420, 1080, 900, 640, 800, 4, true],
  ["#ffcf80", 3.5, 200, 1420, 1150, 190, 420, 6, true],
  ["#ffff66", 3.5, 150, 1420, 1180, 210, 400, 7, true],
  ["#ffc766", 3.5, 120, 1430, 400, 140, 400, 7, true],
  ["#ffff66", 3, 80, 1430, 350, 140, 350, 7, true],
  ["#ffff66", 3, 110, 1190, 100, 150, 90, 8, true],
  ["#e9e9e9", 3, 30, 1290, 120, 60, 90, 7, true],
  ["#ffc04d", 4, 60, 1290, 120, 80, 100, 8, true],
  ["#ffff66", 3, 160, 720, 540, 230, 170, 7, true],
  ["#ffff66", 4, 50, 500, 590, 150, 130, 9, true],
  ["#ffd17a", 3, 130, 760, 520, 160, 220, 5, true],
  ["#ffff66", 3, 35, 820, 350, 100, 100, 8, true],
  ["#ffcf80", 3, 130, 760, 1030, 150, 330, 7, true],
  ["#e9e9e9", 4, 90, 715, 1330, 70, 170, 9, true],
  ["#ffff66", 4, 110, 710, 1370, 80, 150, 10, true],
  ["#ffc04d", 4, 120, 715, 1320, 70, 200, 10, true],
  ["#ffc766", 4, 60, 905, 1120, 50, 160, 8, true],
  ["#ff8080", 3, 26, 980, 620, 110, 160, 5, true],
  ["#ff6b6b", 3, 45, 1400, 230, 120, 170, 6, true],
  ["#ff7b7b", 3, 40, 1470, 720, 70, 120, 6, false],
  ["#ff7b7b", 3, 35, 1450, 1130, 130, 330, 5, true],
  ["#ff6b6b", 4, 40, 910, 1180, 35, 240, 8, true],
  ["#ff7b7b", 3, 30, 1220, 1170, 80, 170, 6, false],
  ["#ffd17a", 3, 60, 1090, 950, 160, 140, 5, true]
];

for (const [color, width, count, cx, cy, rx, ry, step, filled] of clusters) {
  let d = "";
  for (let i = 0; i < count; i++) d += fleck(cx + spread() * rx, cy + spread() * ry, step);
  const path = document.createElementNS("http://www.w3.org/2000/svg", "path");
  path.setAttribute("d", d);
  path.setAttribute("fill", filled ? color : "none");
  path.setAttribute("stroke", color);
  path.setAttribute("stroke-width", width);
  layer.appendChild(path);
}
```
